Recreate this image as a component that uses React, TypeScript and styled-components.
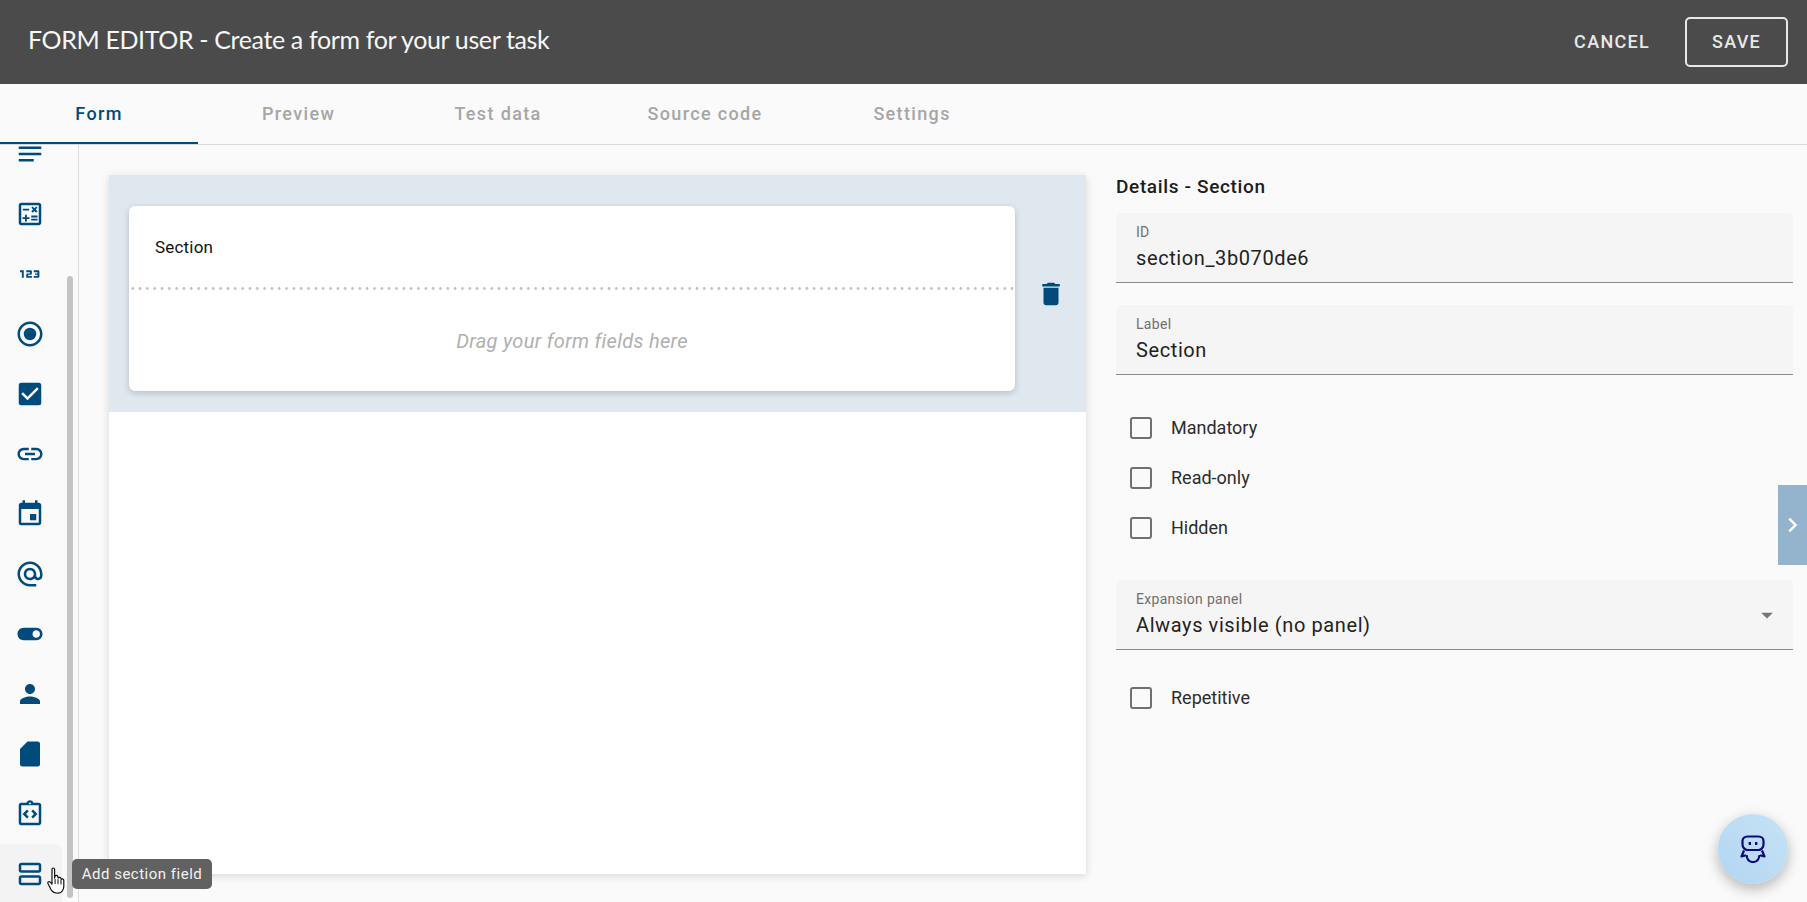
import React from "react";
import styled, { createGlobalStyle } from "styled-components";
import {
  MdNotes, MdOutlineCalculate, Md123, MdOutlineRadioButtonChecked, MdCheckBox, MdLink, MdEvent,
  MdAlternateEmail, MdToggleOn, MdPerson, MdOutlineIntegrationInstructions,
  MdOutlineViewAgenda, MdDelete, MdChevronRight, MdArrowDropDown,
} from "react-icons/md";

const Global = createGlobalStyle`
  html, body { margin: 0; padding: 0; background: #fafafa; }
  body { font-family: Roboto, "Liberation Sans", sans-serif; overflow: hidden; }
  * { box-sizing: border-box; }
`;

const Page = styled.div`
  width: 1807px; height: 902px; position: relative; overflow: hidden;
  display: flex; flex-direction: column; background: #fafafa;
`;
const Header = styled.header`
  height: 84px; flex: none; background: #4b4b4b; color: #f5f5f5;
  display: flex; align-items: center; justify-content: space-between;
  padding: 0 19px 0 28px;
`;
const Title = styled.h1`
  margin: 0 0 6px; font: 400 25px/32px Lato, "Noto Sans", sans-serif; letter-spacing: -.37px; color: #f7f7f7;
`;
const Actions = styled.div`display: flex; align-items: center; gap: 35px;`;
const HeaderButton = styled.button<{ $outlined?: boolean }>`
  font: 500 18px/20px Roboto, sans-serif; letter-spacing: 1.3px; color: #e8e8e8; background: none;
  border: ${p => (p.$outlined ? "2px solid #e8e8e8" : "0")}; border-radius: 5px; padding: 0;
  width: ${p => (p.$outlined ? "103px" : "auto")}; height: ${p => (p.$outlined ? "50px" : "auto")};
`;
const Tabs = styled.nav`
  height: 61px; flex: none; display: flex; gap: 1.5px; border-bottom: 1px solid #d9d9d9; background: #fafafa;
`;
const Tab = styled.div<{ $active?: boolean }>`
  min-width: 198px; padding: 0 49px; display: flex; align-items: center; justify-content: center;
  font: 500 18px/20px Roboto, sans-serif; letter-spacing: 1.35px;
  color: ${p => (p.$active ? "#004a7c" : "#a6a6a6")};
  box-shadow: ${p => (p.$active ? "inset 0 -2px 0 #004a7c" : "none")}; height: 60px;
`;
const Content = styled.main`flex: 1; display: flex; min-height: 0;`;
const Sidebar = styled.aside`
  width: 79px; flex: none; border-right: 1px solid #dcdcdc; position: relative; overflow: hidden;
`;
const IconList = styled.div`margin-top: -21px; width: 62px;`;
const IconTile = styled.div<{ $hover?: boolean }>`
  height: 60px; display: flex; align-items: center; justify-content: center; color: #004a7c;
  background: ${p => (p.$hover ? "#f3f3f3" : "transparent")}; border-radius: 0 6px 0 0;
  padding-right: 2px;
`;
const Thumb = styled.div`
  position: absolute; left: 67px; top: 131px; width: 6px; height: 622px;
  background: #c4c4c4; border-radius: 3px;
`;
const Canvas = styled.section`
  width: 977px; flex: none; margin: 30px 0 28px 30px; background: #fff;
  box-shadow: 0 2px 8px rgba(0,0,0,.14);
`;
const SectionRow = styled.div`
  height: 237px; background: #dfe7ef; display: flex; padding: 31px 0 21px 20px;
`;
const Card = styled.div`
  width: 886px; background: #fff; border-radius: 6px; display: flex; flex-direction: column;
  box-shadow: 0 2px 6px rgba(0,0,0,.18);
`;
const CardHeading = styled.div`
  height: 81px; flex: none; display: flex; align-items: center; padding-left: 26px;
  font: 400 17px/20px Roboto, sans-serif; letter-spacing: .2px; color: #111;
`;
const DottedRule = styled.div`
  height: 3px; flex: none; margin: 0 2px 0 0;
  background: radial-gradient(circle at center, #c2c2c2 1.1px, transparent 1.7px) 0 0 / 7.33px 3px repeat-x;
`;
const DropZone = styled.div`
  flex: 1; display: flex; align-items: center; justify-content: center; padding-top: 1px;
  font: italic 400 20px/24px Roboto, sans-serif; letter-spacing: .3px; color: #b0b0b0;
`;
const RowAction = styled.div`
  flex: 1; display: flex; align-items: center; justify-content: center; color: #004a7c; padding-bottom: 9px;
`;
const Details = styled.section`
  width: 677px; flex: none; margin: 28px 0 0 30px; display: flex; flex-direction: column;
`;
const DetailsTitle = styled.h2`
  margin: 0; height: 28px; font: 500 19px/28px Roboto, sans-serif; letter-spacing: .65px; color: #1c1c1c;
`;
const Field = styled.div<{ $top: number }>`
  height: 70px; flex: none; margin-top: ${p => p.$top}px; background: #f5f5f5; border-radius: 5px 5px 0 0;
  border-bottom: 1px solid #8a8a8a; padding: 10px 20px 0; position: relative;
`;
const FieldLabel = styled.div`
  font: 400 14px/18px Roboto, sans-serif; letter-spacing: .3px; color: #6f6f6f;
`;
const FieldValue = styled.div`
  font: 400 20px/26px Roboto, sans-serif; letter-spacing: .6px; color: #222; margin-top: 4px;
`;
const Caret = styled.div`
  position: absolute; right: 12px; top: 21px; color: #757575; display: flex;
`;
const CheckRow = styled.label<{ $top?: number }>`
  height: 50px; flex: none; display: flex; align-items: center; gap: 19px; padding-left: 14px;
  margin-top: ${p => p.$top ?? 0}px;
  font: 400 18px/22px Roboto, sans-serif; color: #2c2c2c;
`;
const Box = styled.span`
  width: 22px; height: 22px; border: 2px solid #707070; border-radius: 3px; flex: none;
`;
const SideTab = styled.div`
  position: absolute; right: 0; top: 485px; width: 29px; height: 80px; background: #93b4cc; color: #fff;
  display: flex; align-items: center; justify-content: center;
`;
const Fab = styled.div`
  position: absolute; left: 1718px; top: 814px; width: 70px; height: 70px; border-radius: 50%;
  background: linear-gradient(45deg, #b3d5f2, #c6e3f5);
  box-shadow: 0 5px 14px rgba(0,0,0,.28);
  display: flex; align-items: center; justify-content: center;
`;
const Tooltip = styled.div`
  position: absolute; left: 72px; top: 859px; width: 140px; height: 30px; border-radius: 5px;
  background: #616161; color: #f2f2f2; display: flex; align-items: center; justify-content: center;
  font: 400 15px/18px Roboto, sans-serif; letter-spacing: .5px;
`;
const Cursor = styled.svg`
  position: absolute; left: 47px; top: 867px;
`;

const FileIcon = ({ size }: { size: number }) => (
  <svg width={size} height={size} viewBox="0 0 24 24" fill="currentColor">
    <path d="M10 2h8a2 2 0 0 1 2 2v16a2 2 0 0 1-2 2H6a2 2 0 0 1-2-2V8z" />
  </svg>
);

const tools = [MdNotes, MdOutlineCalculate, Md123, MdOutlineRadioButtonChecked, MdCheckBox, MdLink, MdEvent,
  MdAlternateEmail, MdToggleOn, MdPerson, FileIcon, MdOutlineIntegrationInstructions, MdOutlineViewAgenda];

export default function App() {
  return (
    <Page>
      <Global />
      <Header>
        <Title>FORM EDITOR - Create a form for your user task</Title>
        <Actions>
          <HeaderButton>CANCEL</HeaderButton>
          <HeaderButton $outlined>SAVE</HeaderButton>
        </Actions>
      </Header>
      <Tabs>
        <Tab $active>Form</Tab>
        <Tab>Preview</Tab>
        <Tab>Test data</Tab>
        <Tab>Source code</Tab>
        <Tab>Settings</Tab>
      </Tabs>
      <Content>
        <Sidebar>
          <IconList>
            {tools.map((Icon, i) => (
              <IconTile key={i} $hover={i === tools.length - 1}><Icon size={30} /></IconTile>
            ))}
          </IconList>
          <Thumb />
        </Sidebar>
        <Canvas>
          <SectionRow>
            <Card>
              <CardHeading>Section</CardHeading>
              <DottedRule />
              <DropZone>Drag your form fields here</DropZone>
            </Card>
            <RowAction><MdDelete size={30} /></RowAction>
          </SectionRow>
        </Canvas>
        <Details>
          <DetailsTitle>Details - Section</DetailsTitle>
          <Field $top={12}>
            <FieldLabel>ID</FieldLabel>
            <FieldValue>section_3b070de6</FieldValue>
          </Field>
          <Field $top={22}>
            <FieldLabel>Label</FieldLabel>
            <FieldValue>Section</FieldValue>
          </Field>
          <CheckRow $top={28}><Box />Mandatory</CheckRow>
          <CheckRow><Box />Read-only</CheckRow>
          <CheckRow><Box />Hidden</CheckRow>
          <Field $top={27}>
            <FieldLabel>Expansion panel</FieldLabel>
            <FieldValue>Always visible (no panel)</FieldValue>
            <Caret><MdArrowDropDown size={28} /></Caret>
          </Field>
          <CheckRow $top={23}><Box />Repetitive</CheckRow>
        </Details>
      </Content>
      <SideTab><MdChevronRight size={30} /></SideTab>
      <Tooltip>Add section field</Tooltip>
      <Cursor width="20" height="27" viewBox="0 0 20 27">
        <path d="M5 2.2c0-1.6 2.6-1.6 2.6 0v9l.6-2.6c1.7-.6 2.6.2 2.6 1.4l.4 1c1-1.2 2.7-.6 2.7.6l.3.8c1-.9 2.6-.3 2.6 1.2v5.6c0 3.6-2.3 7-5.8 7-3.800 0-5.200-1-7-3.600L1.200 17c-1.200-1.700.6-3.200 2-1.900L5 17z" fill="#fff" stroke="#111" strokeWidth="1.2" strokeLinejoin="round" />
        <path d="M8.100 12v5M11 12.200v5M14 13v4.500" stroke="#111" strokeWidth="1" fill="none" />
      </Cursor>
      <Fab>
        <svg width="26" height="28" viewBox="0 0 26 28" fill="none" stroke="#0a0a78" strokeWidth="2.200">
          <path d="M7.500 1.500h11c3 0 5 2 5 4.500v3.500c0 3-2.500 5.500-5 5.500h-11c-2.500 0-5-2.500-5-5.500V6c0-2.500 2-4.500 5-4.500z" />
          <path d="M4 15.500 1.500 21.500l4.500-1.300M22 15.500l2.500 6-4.500-1.300" strokeLinejoin="round" />
          <path d="M6.500 20c.5 4.500 3 7 6.500 7s6-2.500 6.500-7" />
          <path d="M9.800 7v3M16.200 7v3" strokeWidth="2.300" />
        </svg>
      </Fab>
    </Page>
  );
}
